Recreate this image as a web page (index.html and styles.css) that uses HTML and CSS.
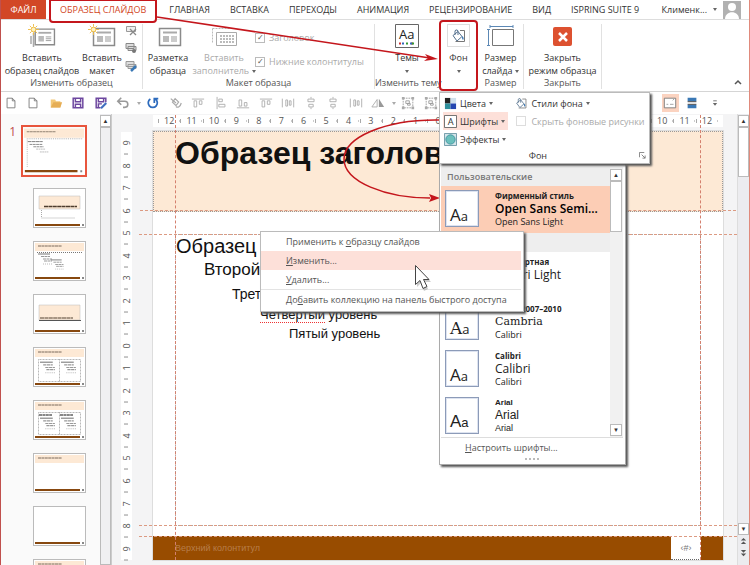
FILE: index.html
```html
<!DOCTYPE html>
<html lang="ru">
	<head>
		<meta charset="UTF-8">
		<title>Образец слайдов</title>
		<link rel="stylesheet" href="styles.css">
	</head>
	<body>
		<svg class="defs" width="0" height="0">
			<symbol id="i-page" viewBox="0 0 16 16"><path d="M3.5 2.500h6l3 3v8h-9z M9.500 2.500v3h3" fill="none" stroke="#777"/></symbol>
			<symbol id="i-folder" viewBox="0 0 16 16"><path d="M2 13V4h5l1 2h5v7z" fill="#f3c877"/><path d="M2 13l3-6h10l-2 6z" fill="#e6ae55"/></symbol>
			<symbol id="i-save" viewBox="0 0 16 16"><path d="M2.500 2.500h11v11h-11z M5 2.500v4h6v-4 M5 13.500v-4h6v4" fill="none" stroke="#6d479f" stroke-width="1.700"/></symbol>
			<symbol id="i-saveas" viewBox="0 0 16 16"><path d="M13.500 7v-4.500h-11v11h5 M5 2.500v4h6v-4 M5 13v-4h4" fill="none" stroke="#6d479f" stroke-width="1.700"/><path d="M8 14l6-6" stroke="#3f6fc0" stroke-width="2.500"/></symbol>
			<symbol id="i-undo" viewBox="0 0 16 16"><path d="M2 6h8a3 3 0 0 1 0 7H8 M6 2L2 6l4 4" fill="none" stroke="#999" stroke-width="1.800"/></symbol>
			<symbol id="i-redo" viewBox="0 0 16 16"><path d="M10.500 3.500A5.200 5.200 0 1 1 5 3.500 M9.500 8V3h4.500" fill="none" stroke="#2d6bbd" stroke-width="2"/></symbol>
			<symbol id="i-brush" viewBox="0 0 16 16"><path d="M2 3l6 5 M7 3l4 4-3 4-4-4z M8 12c2 2 5 0 6-4" fill="none" stroke="#aaa" stroke-width="1.400"/></symbol>
			<symbol id="i-alignt" viewBox="0 0 16 16"><path d="M1 3.500h14 M3.500 5.500h3v7h-3z M9.500 5.500h3v4h-3z" fill="none" stroke="#aaa"/></symbol>
			<symbol id="i-alignl" viewBox="0 0 16 16"><path d="M3.500 1v14 M5.500 3.500h4v3h-4z M5.500 9.500h7v3h-7z" fill="none" stroke="#aaa"/></symbol>
			<symbol id="i-alignb" viewBox="0 0 16 16"><path d="M1 13.500h14 M3.500 4.500h3v7h-3z M9.500 7.500h3v4h-3z" fill="none" stroke="#aaa"/></symbol>
			<symbol id="i-center" viewBox="0 0 16 16"><path d="M8 1v2 M8 13v2 M4.500 3.500h7v3h-7z M5.500 9.500h5v3h-5z" fill="none" stroke="#aaa"/></symbol>
			<symbol id="i-distr" viewBox="0 0 16 16"><path d="M1.500 3v10 M14.500 3v10 M5.500 4.500h2v7h-2z M9.500 5.500h2v5h-2z" fill="none" stroke="#aaa"/></symbol>
			<symbol id="i-rotate" viewBox="0 0 16 16"><path d="M1 12.500L7 4v8.500z" fill="none" stroke="#aaa"/><path d="M9 3v9.500h6z" fill="#999"/></symbol>
			<symbol id="i-group" viewBox="0 0 16 16"><path d="M2.500 2.500h11v11h-11z" fill="none" stroke="#999" stroke-dasharray="2 1"/><path d="M5.500 5.500h4v3h-4z M7.500 8.500h3v2h-3z" fill="none" stroke="#999"/><path d="M1 1h3v3H1z M12 1h3v3h-3z M1 12h3v3H1z M12 12h3v3h-3z" fill="#aaa"/></symbol>
			<symbol id="i-panes" viewBox="0 0 16 16"><path d="M1.500 2.500h13v11h-13z" fill="#fff" stroke="#777"/><path d="M4 9.500h2 M8 9.500h4 M11 5l2-2" stroke="#999"/></symbol>
			<symbol id="i-split" viewBox="0 0 16 16"><path d="M3 2h10v4H3z M3 10h10v4H3z" fill="#3a78b5"/><path d="M3 6.500h10M3 9.500h10" stroke="#333"/></symbol>
			<symbol id="i-bucket" viewBox="0 0 16 16"><path d="M9 2.500h4.500v11h-9" fill="none" stroke="#777"/><path d="M2 7.500l5-4 4 5-5 4.500z M4 7V4a1.500 1.500 0 0 1 3-1v4" fill="#fff" stroke="#55718e"/><path d="M11 8c2 1 2 3 1 4-1-1-1-2-1-4z" fill="#3a78b5"/></symbol>
			<symbol id="i-slide" viewBox="0 0 28 24"><path d="M5.500 4.500h21v17h-21z" fill="#fff" stroke="#8a8a8a" stroke-width="1.500"/><path d="M9 8.500h14" stroke="#aaa" stroke-width="2"/><path d="M9 12h6v6H9z" fill="#bbb"/><path d="M17 13h6M17 15h6M17 17h6" stroke="#999"/></symbol>
			<symbol id="i-star" viewBox="0 0 12 12"><circle cx="6" cy="6" r="2.500" fill="#fff3bf" stroke="#eebb44"/><path d="M6 0v3M6 9v3M0 6h3M9 6h3M2 2l2 2M8 8l2 2M10 2L8 4M4 8l-2 2" stroke="#eebb44"/></symbol>
			<symbol id="t-title" viewBox="0 0 66 50">
				<path d="M0 0h66v50H0z" fill="#fff"/><path d="M1 1h64v10H1z" fill="#fde9d5"/><path d="M4 4.500h31" stroke="#8a7b6c" stroke-dasharray="3 .4"/><path d="M4 12h60" stroke="#aaa" stroke-dasharray="1 1"/><path d="M2 46.500h56" stroke="#87480f" stroke-width="2.500"/><path d="M61 45.500h2v2h-2z" fill="#888"/>
			</symbol>
			<symbol id="t-plain" viewBox="0 0 51 38">
				<path d="M0 0h51v38H0z" fill="#fff"/><path d="M1 36h45" stroke="#87480f" stroke-width="2"/><path d="M48 35h2v2h-2z" fill="#888"/>
			</symbol>
			<symbol id="t-head" viewBox="0 0 51 38">
				<use href="#t-plain"/><path d="M1 1h49v8H1z" fill="#fde9d5"/><path d="M4 4h24" stroke="#7a6a5c" stroke-dasharray="3 .4"/>
			</symbol>
			<symbol id="t-lines" viewBox="0 0 16 12"><path d="M0 1h12" stroke="#777"/><path d="M3 3.500h9M5 6h9M6 8h8" stroke="#999" stroke-dasharray="3 .5"/><path d="M5 11h10" stroke="#bbb" stroke-dasharray="1 1"/></symbol>
		</svg>

		<div class="app">
			<nav class="tabs">
				<a href="#" class="tab tab-file">ФАЙЛ</a>
				<a href="#" class="tab tab-active">ОБРАЗЕЦ СЛАЙДОВ</a>
				<a href="#" class="tab">ГЛАВНАЯ</a>
				<a href="#" class="tab">ВСТАВКА</a>
				<a href="#" class="tab">ПЕРЕХОДЫ</a>
				<a href="#" class="tab">АНИМАЦИЯ</a>
				<a href="#" class="tab">РЕЦЕНЗИРОВАНИЕ</a>
				<a href="#" class="tab">ВИД</a>
				<a href="#" class="tab">ISPRING SUITE 9</a>
				<button class="user">Клименк... <i class="arr"></i></button>
				<svg class="avatar" viewBox="0 0 18 18"><path d="M0 0h18v18H0z" fill="#b1b1b1"/><circle cx="9" cy="6" r="4" fill="#fff"/><path d="M2 18c0-9 14-9 14 0z" fill="#fff"/></svg>
			</nav>

			<div class="ribbon">
				<div class="group g-edit">
					<div class="tools">
						<button class="big w-master">
							<svg class="ico" viewBox="0 0 28 24"><path d="M5.500 9v14M3 12v8" stroke="#aaa" stroke-width="1.500"/><use href="#i-slide" x="2" y="1" width="26" height="22"/><use href="#i-star" width="11" height="11"/></svg>
							<span>Вставить<br>образец слайдов</span>
						</button>
						<button class="big w-layout">
							<svg class="ico" viewBox="0 0 28 24"><use href="#i-slide" width="28" height="24"/><use href="#i-star" width="11" height="11"/></svg>
							<span>Вставить<br>макет</span>
						</button>
						<div class="small-tools">
							<button aria-label="Удалить"><svg viewBox="0 0 12 12"><path d="M1.500 2.500h9v5h-9z" fill="#eee" stroke="#999"/><path d="M5 5l6 6M11 5l-6 6" stroke="#888" stroke-width="1.300"/></svg></button>
							<button aria-label="Сохранить"><svg viewBox="0 0 12 12"><path d="M1 1.500h8v5H1z M3 4.500h8v4H3z" fill="#ddd" stroke="#888"/><circle cx="9" cy="9" r="2" fill="#777"/></svg></button>
							<button aria-label="Переименовать"><svg viewBox="0 0 12 12"><path d="M1 1.500h8v5H1z M3 4.500h8v4H3z" fill="#ddd" stroke="#999"/><path d="M6 11l5-5" stroke="#3a78b5" stroke-width="2.500"/></svg></button>
						</div>
					</div>
					<div class="group-name">Изменить образец</div>
				</div>
				<div class="group g-layout">
					<div class="tools">
						<button class="big w-layout">
							<svg class="ico" viewBox="0 0 28 24"><use href="#i-slide" width="28" height="24"/></svg>
							<span>Разметка<br>образца</span>
						</button>
						<button class="big w-holder" disabled>
							<svg class="ico" viewBox="0 0 28 24"><path d="M2.500 4.500h17M2.500 4.500v14" stroke="#bbb" stroke-dasharray="2 1"/><path d="M6.500 8.500h20v13h-20z" fill="#fff" stroke="#aaa"/><path d="M10 12h14M10 15h14M10 18h14" stroke="#bbb" stroke-width="2" stroke-dasharray="2 1"/></svg>
							<span>Вставить<br>заполнитель <i class="arr"></i></span>
						</button>
						<div class="checks">
							<label><input type="checkbox" checked disabled>Заголовок</label>
							<label><input type="checkbox" checked disabled>Нижние колонтитулы</label>
						</div>
					</div>
					<div class="group-name">Макет образца</div>
				</div>
				<div class="group g-theme">
					<div class="tools">
						<button class="big w-theme">
							<svg class="ico" viewBox="0 0 24 24"><path d="M.5.5h23v23H.5z" fill="#fff" stroke="#666"/><text x="4" y="15" class="ico-aa">Aa</text><path d="M4 19.500h16" stroke="#c33" stroke-width="2" stroke-dasharray="2 10"/><path d="M7 19.500h13" stroke="#36b" stroke-width="2" stroke-dasharray="2 6"/><path d="M11 19.500h9" stroke="#393" stroke-width="2" stroke-dasharray="2 4"/></svg>
							<span>Темы<br><i class="arr"></i></span>
						</button>
					</div>
					<div class="group-name">Изменить тему</div>
				</div>
				<button class="big bg-button">
					<span class="bg-ico"><svg viewBox="0 0 16 16"><use href="#i-bucket"/></svg></span>
					<span>Фон<br><i class="arr"></i></span>
				</button>
				<div class="group g-size">
					<div class="tools">
						<button class="big w-size">
							<svg class="ico" viewBox="0 0 28 24"><path d="M3 1v3M26 1v3M3 2.500h23M1.500 5v17M0 5.500h3M0 21.500h3" stroke="#5c88b5"/><path d="M5.500 5.500h21v16h-21z" fill="#fff" stroke="#777"/></svg>
							<span>Размер<br>слайда <i class="arr"></i></span>
						</button>
					</div>
					<div class="group-name">Размер</div>
				</div>
				<div class="group g-close">
					<div class="tools">
						<button class="big w-close">
							<svg class="ico" viewBox="0 0 24 24"><rect x="2" y="3" width="19" height="19" rx="2" fill="#dd5130"/><path d="M8 9l8 8M16 9l-8 8" stroke="#fff" stroke-width="2.500"/></svg>
							<span>Закрыть<br>режим образца</span>
						</button>
					</div>
					<div class="group-name">Закрыть</div>
				</div>
				<button class="collapse" aria-label="Свернуть ленту"><svg viewBox="0 0 8 6"><path d="M1 5l3-3 3 3" fill="none" stroke="#555" stroke-width="1.500"/></svg></button>
			</div>

			<div class="quick">
				<button aria-label="Создать"><svg><use href="#i-page"/></svg></button>
				<button aria-label="Новый"><svg><use href="#i-page"/></svg></button>
				<button aria-label="Открыть"><svg><use href="#i-folder"/></svg></button>
				<button aria-label="Сохранить"><svg><use href="#i-save"/></svg></button>
				<button aria-label="Сохранить как"><svg><use href="#i-saveas"/></svg></button>
				<button aria-label="Отменить"><svg><use href="#i-undo"/></svg></button>
				<i class="arr pale"></i>
				<button aria-label="Повторить"><svg><use href="#i-redo"/></svg></button>
				<button aria-label="Формат"><svg><use href="#i-brush"/></svg></button>
				<button aria-label="По верхнему краю"><svg><use href="#i-alignt"/></svg></button>
				<button aria-label="По левому краю"><svg><use href="#i-alignl"/></svg></button>
				<button aria-label="По нижнему краю"><svg><use href="#i-alignb"/></svg></button>
				<button aria-label="По верху"><svg><use href="#i-alignt"/></svg></button>
				<button aria-label="По горизонтали"><svg><use href="#i-distr"/></svg></button>
				<button aria-label="По центру"><svg><use href="#i-center"/></svg></button>
				<button aria-label="По середине"><svg><use href="#i-center"/></svg></button>
				<button aria-label="Распределить"><svg><use href="#i-distr"/></svg></button>
				<button aria-label="Повернуть"><svg><use href="#i-rotate"/></svg></button>
				<i class="arr pale"></i>
				<button aria-label="Группировать"><svg><use href="#i-group"/></svg></button>
				<button aria-label="Разгруппировать"><svg><use href="#i-group"/></svg></button>
				<div class="quick-end">
					<button aria-label="Область" class="on"><svg><use href="#i-panes"/></svg></button>
					<button aria-label="Разделить"><svg><use href="#i-split"/></svg></button>
					<button aria-label="Настройка панели"><svg viewBox="0 0 16 16"><path d="M6 5.500h4" stroke="#666"/><path d="M5.500 8h5L8 11z" fill="#666"/></svg></button>
				</div>
			</div>

			<div class="work">
				<div class="thumbs">
					<div class="thumb-row">
						<span class="num">1</span>
						<svg class="thumb thumb-on" viewBox="0 0 66 50"><use href="#t-title"/><path d="M5 15h16" stroke="#777" stroke-dasharray="4 .4"/><path d="M7 18h14M11 20.500h11" stroke="#888" stroke-dasharray="3 .5"/><path d="M14 23h10M18 26h9" stroke="#bbb" stroke-dasharray="2 .5"/><path d="M4.500 13v30" stroke="#bbb" stroke-dasharray="1 1"/></svg>
					</div>
					<svg class="thumb" viewBox="0 0 51 38"><use href="#t-plain"/><path d="M5 7h41v13H5z" fill="#fde9d5" stroke="#bbb" stroke-width=".5"/><path d="M10 17.500h33" stroke="#4d3c2d" stroke-width="1.500" stroke-dasharray="4 .4"/><path d="M7.500 21v8h34" fill="none" stroke="#aaa" stroke-dasharray="1 1"/></svg>
					<svg class="thumb" viewBox="0 0 51 38"><use href="#t-head"/><path d="M3 10.500h46" stroke="#777" stroke-dasharray="1 1"/><use href="#t-lines" x="4" y="11" width="16" height="12"/><use href="#t-lines" x="15" y="17" width="18" height="11"/></svg>
					<svg class="thumb" viewBox="0 0 51 38"><use href="#t-plain"/><path d="M5 10h41v15H5z" fill="#fde9d5" stroke="#bbb" stroke-width=".5"/><path d="M6 23h33" stroke="#8a7968" stroke-width="1.500" stroke-dasharray="4 .4"/><path d="M5 25.500h42" stroke="#555"/></svg>
					<svg class="thumb" viewBox="0 0 51 38"><use href="#t-head"/><path d="M4.500 11.500h42v22h-42z M25.500 11v23" fill="none" stroke="#999" stroke-width=".7" stroke-dasharray="1 .5"/><use href="#t-lines" x="6" y="12" width="17" height="15"/><use href="#t-lines" x="27" y="12" width="17" height="15"/></svg>
					<svg class="thumb" viewBox="0 0 51 38"><use href="#t-head"/><path d="M4.500 11.500h42v22h-42z M25.500 11v23" fill="none" stroke="#999" stroke-width=".7" stroke-dasharray="1 .5"/><path d="M5 14h13M26 14h13" stroke="#888" stroke-width="2" stroke-dasharray="3 .4"/><use href="#t-lines" x="6" y="16" width="17" height="13"/><use href="#t-lines" x="27" y="16" width="17" height="13"/></svg>
					<svg class="thumb" viewBox="0 0 51 38"><use href="#t-head"/></svg>
					<svg class="thumb" viewBox="0 0 51 38"><use href="#t-plain"/></svg>
					<svg class="thumb" viewBox="0 0 51 38"><use href="#t-head"/></svg>
				</div>
				<div class="scroll scroll-left"><button aria-label="Вверх">▲</button><div class="scroll-thumb"></div></div>
				<div class="ruler-v">
					<span>9</span><span>8</span><span>7</span><span>6</span><span>5</span><span>4</span><span>3</span><span>2</span><span>1</span><span>0</span><span>1</span><span>2</span><span>3</span><span>4</span><span>5</span><span>6</span><span>7</span><span>8</span><span>9</span>
				</div>
				<div class="canvas">
					<div class="ruler-h">
						<span>12</span><span>11</span><span>10</span><span>9</span><span>8</span><span>7</span><span>6</span><span>5</span><span>4</span><span>3</span><span>2</span><span>1</span><span>0</span><span>1</span><span>2</span><span>3</span><span>4</span><span>5</span><span>6</span><span>7</span><span>8</span><span>9</span><span>10</span><span>11</span><span>12</span>
					</div>
					<div class="slide">
						<h1 class="slide-title">Образец заголовка</h1>
						<div class="slide-body">
							<p class="lv1">Образец текста</p>
							<p class="lv2">Второй уровень</p>
							<p class="lv3">Третий уровень</p>
							<p class="lv4"><span class="typo">Четвертый</span> уровень</p>
							<p class="lv5">Пятый уровень</p>
						</div>
						<div class="slide-footer"><span class="foot-text">Верхний колонтитул</span><span class="foot-num">‹#›</span></div>
						<i class="guide guide-left"></i>
						<i class="guide guide-right"></i>
					</div>
				</div>
				<div class="scroll scroll-right">
					<button aria-label="Вверх">▲</button><div class="scroll-thumb"></div>
					<button aria-label="Вниз" class="last">▼</button>
					<button aria-label="Предыдущий слайд" class="jump"><svg viewBox="0 0 8 8"><path d="M1 4l3-3 3 3zM1 8l3-3 3 3z" fill="#555"/></svg></button>
					<button aria-label="Следующий слайд" class="jump"><svg viewBox="0 0 8 8"><path d="M1 0l3 3 3-3zM1 4l3 3 3-3z" fill="#555"/></svg></button>
				</div>
			</div>

			<svg class="pointers" viewBox="0 0 750 565">
				<path d="M157 17L430 58" fill="none" stroke="#c4161c" stroke-width="1.500"/>
				<path d="M438 59l-13-5 3 4-4 3z" fill="#c4161c"/>
				<path d="M440 120C384 119 344 138 344 159C344 182 386 198 430 198" fill="none" stroke="#c4161c" stroke-width="1.500"/>
				<path d="M440 198l-11-4 2 4-2 4z" fill="#c4161c"/>
			</svg>

			<div class="gallery">
				<div class="gallery-main">
					<div class="gallery-list">
						<div class="gallery-head">Пользовательские</div>
						<a href="#" class="font font-on"><span class="aa">A<small>a</small></span><span class="names"><b>Фирменный стиль</b><span class="f-big f-semi">Open Sans Semi...</span><span class="f-small">Open Sans Light</span></span></a>
						<div class="gallery-head">Встроенные</div>
						<a href="#" class="font"><span class="aa">A<small>a</small></span><span class="names"><b>Стандартная</b><span class="f-big">Calibri Light</span><span class="f-small">Calibri</span></span></a>
						<a href="#" class="font"><span class="aa f-serif">A<small class="f-sans">a</small></span><span class="names"><b>Office 2007–2010</b><span class="f-big f-serif">Cambria</span><span class="f-small">Calibri</span></span></a>
						<a href="#" class="font"><span class="aa">A<small>a</small></span><span class="names"><b>Calibri</b><span class="f-big">Calibri</span><span class="f-small">Calibri</span></span></a>
						<a href="#" class="font f-arial"><span class="aa">A<small>a</small></span><span class="names"><b>Arial</b><span class="f-big">Arial</span><span class="f-small">Arial</span></span></a>
					</div>
					<div class="scroll scroll-gallery"><button aria-label="Вверх">▲</button><div class="scroll-thumb"></div><button aria-label="Вниз" class="last">▼</button></div>
				</div>
				<a href="#" class="gallery-more"><u>Н</u>астроить шрифты...</a>
				<div class="grip"></div>
			</div>

			<div class="bg-panel">
				<div class="bg-cols">
					<div class="bg-col">
						<button><svg viewBox="0 0 14 14"><path d="M1 1h6v6H1z" fill="#222"/><path d="M7 1h6v6H7z" fill="#cfe0ec"/><path d="M1 7h6v6H1z" fill="#2f8f9c"/><path d="M7 7h6v6H7z" fill="#2546b0"/></svg>Цвета <i class="arr"></i></button>
						<button class="hot"><svg viewBox="0 0 14 14"><path d="M.5.5h13v13H.5z" fill="#fff" stroke="#666"/><text x="4" y="11" class="ico-a">A</text></svg>Шрифты <i class="arr"></i></button>
						<button><svg viewBox="0 0 14 14"><path d="M.5.5h13v13H.5z" fill="#d4e5ea" stroke="#6a96a4"/><circle cx="7" cy="7" r="5" fill="#6bc0bd" stroke="#4295a0"/></svg>Эффекты <i class="arr"></i></button>
					</div>
					<div class="bg-col">
						<button><svg viewBox="0 0 16 16"><use href="#i-bucket"/></svg>Стили фона <i class="arr"></i></button>
						<label class="hide-pics"><input type="checkbox" disabled>Скрыть фоновые рисунки</label>
					</div>
				</div>
				<div class="bg-name"><span>Фон</span><svg viewBox="0 0 8 8"><path d="M.5 6V.5H6M3 3l4 4M7 4v3H4" fill="none" stroke="#777"/></svg></div>
			</div>

			<div class="menu">
				<a href="#">Применить к <u>о</u>бразцу слайдов</a>
				<a href="#" class="hot"><u>И</u>зменить...</a>
				<a href="#"><u>У</u>далить...</a>
				<a href="#" class="sep">До<u>б</u>авить коллекцию на панель быстрого доступа</a>
				<svg class="cursor" viewBox="0 0 18 28"><path d="M3 3v20l4-4 3 8 4-2-3-7h6z" fill="#999" opacity=".5"/><path d="M1.500 1.500v19l4.500-4 3 8 4-2-3.500-7h5.500z" fill="#fff" stroke="#444"/></svg>
			</div>
		</div>
	</body>
</html>
```

FILE: styles.css
```css
html,body,h1,p {
	margin: 0;
	padding: 0;
}
* {
	box-sizing: border-box;
}
body {
	font-family: "Open Sans", "Noto Sans", sans-serif;
	font-size: 9px;
	line-height: 13px;
	color: #333;
	background-color: #fff;
}
a {
	color: inherit;
	text-decoration: none;
}
button {
	font: inherit;
	color: inherit;
	margin: 0;
	padding: 0;
	border: none;
	background: none;
}
.defs {
	position: absolute;
}
.arr {
	display: inline-block;
	vertical-align: middle;
	border: 2px solid transparent;
	border-top: 3px solid #666;
	border-bottom: none;
}
.pale {
	border-top-color: #aaa;
}

.app {
	position: relative;
	display: flex;
	flex-direction: column;
	height: 100vh;
	overflow: hidden;
	border-left: 1px solid #c0504d;
	border-right: 1px solid #e08a7c;
}

/* tabs */
.tabs {
	display: flex;
	align-items: center;
	height: 20px;
	gap: 20px;
	border-bottom: 1px solid #ddd;
	white-space: nowrap;
}
.tab-file {
	flex: none;
	width: 45px;
	line-height: 19px;
	text-align: center;
	color: #fff;
	background-color: #d24726;
}
.tab-active {
	align-self: flex-start;
	position: relative;
	z-index: 1;
	height: 23px;
	margin-left: -17px;
	margin-right: -8px;
	padding: 2px 9px 0;
	color: #d24726;
	background-color: #fff;
	border: 2px solid #c4161c;
	border-top-width: 1px;
	border-radius: 0 0 4px 4px;
}
.user {
	display: flex;
	align-items: center;
	gap: 6px;
	margin-left: auto;
}
.avatar {
	flex: none;
	width: 18px;
	height: 18px;
	margin: 0 8px 0 -14px;
}

/* ribbon */
.ribbon {
	display: flex;
	height: 72px;
	border-bottom: 1px solid #d5d5d5;
}
.group {
	display: flex;
	flex-direction: column;
	margin: 4px 0 2px;
	border-right: 1px solid #e1e1e1;
}
.tools {
	display: flex;
	flex: 1;
}
.group-name {
	text-align: center;
	line-height: 12px;
	color: #555;
	white-space: nowrap;
}
.big {
	display: flex;
	flex-direction: column;
	align-items: center;
	gap: 3px;
	white-space: nowrap;
}
.big:disabled {
	color: #aaa;
}
.ico {
	width: 28px;
	height: 24px;
}
.ico-aa {
	font-size: 13px;
	fill: #222;
}
.ico-a {
	font-size: 10px;
	fill: #333;
}
.g-edit {
	width: 142px;
}
.g-layout {
	width: 232px;
}
.g-theme {
	width: 64px;
	border-right: none;
}
.g-size {
	width: 46px;
}
.g-close {
	width: 78px;
}
.w-master {
	width: 82px;
}
.w-layout {
	width: 50px;
}
.w-holder {
	width: 62px;
}
.w-theme,.w-size,.w-close {
	width: 100%;
}
.g-edit .w-layout {
	width: 38px;
}
.small-tools {
	display: flex;
	flex-direction: column;
	gap: 6px;
	padding-left: 4px;
}
.small-tools svg {
	display: block;
	width: 12px;
	height: 12px;
}
.checks {
	display: flex;
	flex-direction: column;
	gap: 11px;
	padding-top: 7px;
	color: #aaa;
	white-space: nowrap;
}
.checks label,.hide-pics {
	display: flex;
	align-items: center;
	gap: 4px;
}
input[type="checkbox"] {
	appearance: none;
	display: grid;
	place-items: center;
	width: 10px;
	height: 10px;
	margin: 0;
	border: 1px solid #bbb;
	font-size: 8px;
	line-height: 8px;
}
input:checked::before {
	content: "✓";
}
.bg-button {
	width: 39px;
	padding-top: 2px;
	border: 2px solid #c4161c;
	border-radius: 4px;
	gap: 4px;
}
.bg-ico {
	display: grid;
	place-items: center;
	width: 23px;
	height: 23px;
	border: 1px solid #ddd;
}
.bg-ico svg {
	width: 16px;
	height: 16px;
}
.collapse {
	align-self: flex-end;
	margin: 0 7px 3px auto;
}
.collapse svg {
	width: 8px;
	height: 6px;
}

/* quick access */
.quick {
	display: flex;
	align-items: center;
	height: 22px;
	background-color: #fff;
}
.quick button {
	flex: none;
	width: 23px;
	height: 18px;
	margin-right: -1px;
	padding-left: 3px;
}
.quick button:nth-child(even) {
	margin-right: 0;
}
.quick svg {
	display: block;
	width: 14px;
	height: 14px;
}
.quick .arr {
	margin: 0 2px 0 1px;
}
.quick-end {
	display: flex;
	margin-left: auto;
	padding-right: 22px;
}
.quick .on {
	width: 17px;
	margin-right: 3px;
	padding-left: 1px;
	background-color: #fbd3c0;
}

/* work area */
.work {
	display: flex;
	flex: 1;
	min-height: 0;
	background-color: #f4f4f5;
}
.thumbs {
	display: flex;
	flex-direction: column;
	align-items: flex-end;
	gap: 15px;
	width: 99px;
	padding: 11px 15px 0 0;
	overflow: hidden;
	background-color: #fafafa;
}
.thumb-row {
	display: flex;
	gap: 5px;
	margin: 0 -2px -3px 0;
}
.num {
	color: #c0504d;
	font-size: 12px;
}
.thumb {
	flex: none;
	width: 51px;
	height: 38px;
	outline: 1px solid #bbb;
}
.thumb-on {
	width: 66px;
	height: 52px;
	border: 2px solid #e8553d;
	outline: none;
}
.scroll {
	display: flex;
	flex-direction: column;
	width: 12px;
	background-color: #ececef;
}
.scroll button {
	height: 12px;
	border: 1px solid #bbb;
	background-color: #fff;
	font-size: 6px;
	line-height: 8px;
}
.scroll .last {
	margin-top: auto;
}
.scroll .jump {
	height: 13px;
	border: none;
	background: none;
}
.jump svg {
	width: 7px;
	height: 7px;
}
.scroll-thumb {
	border: 1px solid #bbb;
	background-color: #fff;
}
.scroll-left {
	border-right: 1px solid #ccc;
	padding-top: 1px;
}
.scroll-left .scroll-thumb {
	flex: 1;
	background-color: #f0f0f2;
}
.ruler-v,.ruler-h {
	display: flex;
	background-color: #fff;
	line-height: 12px;
	color: #555;
}
.ruler-v {
	flex-direction: column;
	width: 11px;
	margin: 18px 0 5px 9px;
}
.ruler-h span,.ruler-v span {
	flex: 1 1 0;
	display: grid;
	place-items: center;
	background-image: linear-gradient(#aaa, #aaa), linear-gradient(#ccc, #ccc);
	background-repeat: no-repeat;
	background-size: 1px 4px, 1px 2px;
	background-position: 0 4px, 21px 5px;
}
.ruler-v span {
	writing-mode: vertical-rl;
	transform: rotate(180deg);
	background-size: 4px 1px;
	background-position: 4px 0;
	min-height: 0;
}
.ruler-h {
	margin: 1px 14px 4px 14px;
	padding: 0 5px;
}
.canvas {
	display: flex;
	flex: 1;
	flex-direction: column;
	min-width: 0;
	padding: 0 0 5px 7px;
}

/* slide */
.slide {
	position: relative;
	display: flex;
	flex: 1;
	flex-direction: column;
	margin: 0 14px;
	background-color: #fff;
	font-family: "Liberation Sans", Arial, sans-serif;
	color: #111;
	outline: 1px solid #ddd;
}
.slide-title {
	position: relative;
	height: 81px;
	padding: 3px 21px;
	font-size: 32px;
	line-height: 36px;
	background-color: #fde9d5;
	border: 1px dotted #999;
}
.slide-title::after,.slide-body::before,.slide-body::after,.slide-footer::before {
	content: "";
	position: absolute;
	left: -14px;
	right: -14px;
	border-top: 1px dashed #dc9a82;
}
.slide-title::after {
	bottom: 0;
}
.slide-body {
	flex: 1;
	margin: 22px 22px 10px;
	border: 1px dotted #aaa;
}
.slide-body::before {
	margin-top: -1px;
}
.slide-body::after {
	bottom: 34px;
}
.lv1 {
	font-size: 20px;
	line-height: 22px;
}
.lv2 {
	padding-left: 28px;
	font-size: 17px;
	line-height: 26px;
}
.lv3 {
	padding-left: 56px;
	font-size: 14px;
	line-height: 22px;
}
.lv4,.lv5 {
	padding-left: 84px;
	font-size: 13px;
	line-height: 19px;
}
.lv5 {
	padding-left: 113px;
}
.typo {
	border-bottom: 1px dotted #e33;
}
.slide-footer {
	display: flex;
	align-items: center;
	justify-content: space-between;
	height: 24px;
	padding: 0 22px;
	color: #b77d49;
	background-color: #984c00;
}
.slide-footer::before {
	bottom: 23px;
}
.foot-num {
	align-self: stretch;
	width: 30px;
	line-height: 24px;
	text-align: center;
	color: #777;
	background-color: #fff;
	border-bottom: 1px dotted #666;
}
.guide {
	position: absolute;
	top: -16px;
	bottom: 0;
	border-left: 1px dashed #d4806e;
}
.guide-left {
	left: 22px;
}
.guide-right {
	right: 22px;
}
.scroll-right {
	border-left: 1px solid #ddd;
	padding: 1px 0 4px;
}
.scroll-right .scroll-thumb {
	height: 50px;
}

/* red arrows */
.pointers {
	position: absolute;
	top: 0;
	left: -1px;
	width: 750px;
	height: 565px;
	pointer-events: none;
}

/* font gallery */
.gallery {
	position: absolute;
	top: 163px;
	left: 438px;
	width: 187px;
	padding: 3px 2px 2px 1px;
	background-color: #fff;
	border: 1px solid #aaa;
	box-shadow: 2px 2px 2px #555;
}
.gallery-main {
	display: flex;
	border-bottom: 1px solid #ddd;
}
.gallery-list {
	flex: 1;
	min-width: 0;
}
.gallery-head {
	padding-left: 6px;
	line-height: 19px;
	font-weight: 600;
	color: #777;
	background-color: #eee;
}
.font {
	display: flex;
	gap: 16px;
	height: 47px;
	padding: 4px 3px 4px 4px;
	color: #222;
	white-space: nowrap;
}
.font-on {
	background-color: #fccdb5;
}
.aa {
	width: 34px;
	height: 37px;
	padding: 14px 0 0 4px;
	font-size: 17px;
	line-height: 20px;
	background-color: #fff;
	border: 1px solid #8c9bb8;
	box-shadow: inset 0 0 0 1px #dde3f0;
}
.aa small {
	font-size: 13px;
}
.names {
	display: flex;
	flex-direction: column;
	line-height: 13px;
}
.names b {
	font-size: 8px;
	line-height: 12px;
}
.f-big {
	font-size: 12px;
}
.f-semi {
	font-weight: 600;
	color: #000;
}
.f-serif {
	font-family: "DejaVu Serif", serif;
}
.names .f-serif {
	font-size: 11px;
}
.f-sans {
	font-family: "Open Sans", sans-serif;
}
.f-arial {
	height: 44px;
	font-family: "Liberation Sans", Arial, sans-serif;
}
.scroll-gallery {
	width: 13px;
	padding: 2px 1px 1px 0;
	background-color: #f1f1f1;
}
.scroll-gallery .scroll-thumb {
	height: 51px;
}
.gallery-more {
	display: block;
	padding-left: 24px;
	line-height: 20px;
	color: #555;
}
.grip {
	width: 14px;
	height: 4px;
	margin: 0 auto;
	border-top: 2px dotted #bbb;
}

/* background panel */
.bg-panel {
	position: absolute;
	top: 92px;
	left: 438px;
	width: 211px;
	padding: 1px 3px 0;
	background-color: #fff;
	border: 1px solid #bbb;
	box-shadow: 2px 2px 2px #555;
}
.bg-cols {
	display: flex;
	gap: 5px;
	white-space: nowrap;
}
.bg-col {
	display: flex;
	flex-direction: column;
	align-items: flex-start;
}
.bg-col button,.hide-pics {
	display: flex;
	align-items: center;
	gap: 3px;
	height: 18px;
	padding: 0 3px 0 1px;
}
.bg-col svg {
	width: 13px;
	height: 13px;
}
.bg-col .hot,.menu .hot {
	background-color: #fde0d9;
}
.hide-pics {
	color: #aaa;
}
.hide-pics input {
	border-color: #ddd;
	margin: 0 2px 0 1px;
}
.bg-name {
	display: flex;
	align-items: center;
	justify-content: flex-end;
	gap: 92px;
	line-height: 15px;
}
.bg-name svg {
	width: 7px;
	height: 7px;
}

/* context menu */
.menu {
	position: absolute;
	top: 231px;
	left: 259px;
	width: 264px;
	padding: 0 2px 2px 0;
	background-color: #fff;
	border: 1px solid #bbb;
	box-shadow: 2px 2px 2px #555;
	color: #555;
}
.menu a {
	display: block;
	padding-left: 25px;
	line-height: 19px;
	white-space: nowrap;
}
.menu .sep {
	border-top: 1px solid #e3e3e3;
}
.cursor {
	position: absolute;
	left: 153px;
	top: 32px;
	width: 18px;
	height: 28px;
}
```
